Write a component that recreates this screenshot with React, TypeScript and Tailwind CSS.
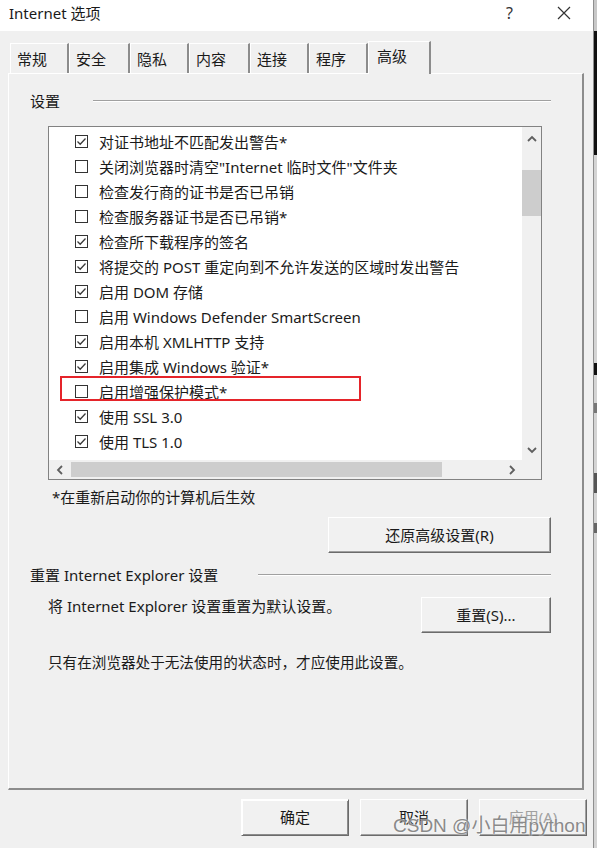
import React from 'react'

const FONT = { fontFamily: '"Noto Sans", "Noto Sans CJK SC", sans-serif' }

const TABS: { label: string; w: string; active?: boolean }[] = [
  { label: '常规', w: 'w-[59px]' },
  { label: '安全', w: 'w-[61px]' },
  { label: '隐私', w: 'w-[59px]' },
  { label: '内容', w: 'w-[61px]' },
  { label: '连接', w: 'w-[59px]' },
  { label: '程序', w: 'w-[59px]' },
  { label: '高级', w: 'w-[63px]', active: true },
]

const ROWS: { label: string; checked: boolean; marked?: boolean }[] = [
  { label: '对证书地址不匹配发出警告*', checked: true },
  { label: '关闭浏览器时清空"Internet 临时文件"文件夹', checked: false },
  { label: '检查发行商的证书是否已吊销', checked: false },
  { label: '检查服务器证书是否已吊销*', checked: false },
  { label: '检查所下载程序的签名', checked: true },
  { label: '将提交的 POST 重定向到不允许发送的区域时发出警告', checked: true },
  { label: '启用 DOM 存储', checked: true },
  { label: '启用 Windows Defender SmartScreen', checked: false },
  { label: '启用本机 XMLHTTP 支持', checked: true },
  { label: '启用集成 Windows 验证*', checked: true },
  { label: '启用增强保护模式*', checked: false, marked: true },
  { label: '使用 SSL 3.0', checked: true },
  { label: '使用 TLS 1.0', checked: true },
  { label: '使用 TLS 1.1', checked: true },
]

const btn =
  'flex items-center justify-center bg-[#f1f1f1] border border-t-white border-l-white border-r-[#6b6b6b] border-b-[#6b6b6b] shadow-[inset_-1px_-1px_0_#a0a0a0] text-[15px] text-[#1a1a1a] leading-none'

function Chevron({ dir }: { dir: 'up' | 'down' | 'left' | 'right' }) {
  const pts = {
    up: '1,6 5,2 9,6',
    down: '1,2 5,6 9,2',
    left: '6,1 2,5 6,9',
    right: '2,1 6,5 2,9',
  }[dir]
  const vertical = dir === 'up' || dir === 'down'
  return (
    <svg width={vertical ? 10 : 8} height={vertical ? 8 : 10} viewBox={vertical ? '0 0 10 8' : '0 0 8 10'}>
      <polyline points={pts} fill="none" stroke="#5f5f5f" strokeWidth="1.8" />
    </svg>
  )
}

function CheckBox({ checked }: { checked: boolean }) {
  return (
    <span className="w-[13px] h-[13px] border border-[#333] bg-white flex items-center justify-center shrink-0">
      {checked && (
        <svg width="11" height="11" viewBox="0 0 11 11">
          <polyline points="1.5,5.5 4.2,8.2 9.5,2.5" fill="none" stroke="#3a3a3a" strokeWidth="1.3" />
        </svg>
      )}
    </span>
  )
}

function Header({ label, gap }: { label: string; gap: string }) {
  return (
    <div className={`flex items-center h-[20px] ${gap}`}>
      <span className="text-[15px] leading-[20px] whitespace-nowrap">{label}</span>
      <div className="flex-1 h-[2px] border-t border-[#a0a0a0] border-b border-b-white" />
    </div>
  )
}

export default function App() {
  return (
    <div className="w-[597px] h-[848px] flex overflow-hidden bg-[#f0f0f0] text-[#1a1a1a]" style={FONT}>
      <div className="w-[593px] flex flex-col relative">
        {/* title bar */}
        <div className="h-[31px] bg-white flex items-center justify-between pl-[9px] pr-[22px]">
          <span className="text-[15px] leading-none -mt-[5px]">Internet 选项</span>
          <div className="flex items-center gap-[44px] -mt-[5px]">
            <span className="text-[16px] leading-none text-[#333]">?</span>
            <svg width="14" height="14" viewBox="0 0 14 14">
              <path d="M1 1 L13 13 M13 1 L1 13" stroke="#333" strokeWidth="1.2" />
            </svg>
          </div>
        </div>

        <div className="px-[8px] pt-[10px]">
          {/* tabs */}
          <div className="flex items-end h-[32px] pl-[2px]">
            {TABS.map(t =>
              t.active ? (
                <div
                  key={t.label}
                  className={`${t.w} h-[33px] -mb-[1px] relative z-10 bg-[#f0f0f0] border-l border-t border-white border-r-2 border-r-[#8c8c8c] pl-[8px] pt-[4px] text-[15px] leading-[20px]`}
                >
                  {t.label}
                </div>
              ) : (
                <div
                  key={t.label}
                  className={`${t.w} h-[30px] bg-[#f0f0f0] border-l border-t border-white border-r-2 border-r-[#8c8c8c] pl-[6px] pt-[5px] text-[15px] leading-[20px]`}
                >
                  {t.label}
                </div>
              ),
            )}
          </div>

          {/* tab panel */}
          <div className="w-[576px] h-[717px] border-l border-t border-white border-r-2 border-b-2 border-r-[#8c8c8c] border-b-[#8c8c8c] pl-[21px] pr-[31px] pt-[17px]">
            <Header label="设置" gap="gap-[33px]" />

            {/* list box */}
            <div className="ml-[18px] mt-[15px] w-[494px] h-[354px] border border-[#828282] bg-white flex flex-col">
              <div className="flex flex-1 min-h-0">
                <div className="flex-1 overflow-hidden pt-[2px]">
                  {ROWS.map(r => (
                    <div key={r.label} className="relative h-[25px] flex items-center pl-[26px] gap-[11px]">
                      <CheckBox checked={r.checked} />
                      <span className="text-[15px] leading-[20px] whitespace-nowrap">{r.label}</span>
                      {r.marked && (
                        <div className="absolute left-[11px] top-[-3px] w-[301px] h-[25px] border-2 border-[#e5242a]" />
                      )}
                    </div>
                  ))}
                </div>
                <div className="w-[19px] bg-[#f0f0f0] flex flex-col">
                  <div className="h-[21px] flex items-center justify-center pt-[2px]">
                    <Chevron dir="up" />
                  </div>
                  <div className="h-[22px]" />
                  <div className="h-[46px] bg-[#cdcdcd]" />
                  <div className="flex-1" />
                  <div className="h-[21px] flex items-center justify-center">
                    <Chevron dir="down" />
                  </div>
                </div>
              </div>
              <div className="h-[19px] flex bg-[#f0f0f0]">
                <div className="w-[20px] flex items-center justify-center pl-[2px]">
                  <Chevron dir="left" />
                </div>
                <div className="ml-[2px] w-[371px] my-[2px] bg-[#cdcdcd]" />
                <div className="flex-1" />
                <div className="w-[20px] flex items-center justify-center">
                  <Chevron dir="right" />
                </div>
                <div className="w-[19px]" />
              </div>
            </div>

            <div className="ml-[22px] mt-[7px] text-[15px] leading-[20px]">*在重新启动你的计算机后生效</div>

            <div className="flex justify-end mt-[10px]">
              <div className={`${btn} w-[223px] h-[36px]`}>还原高级设置(R)</div>
            </div>

            <div className="mt-[12px]">
              <Header label="重置 Internet Explorer 设置" gap="gap-[40px]" />
            </div>

            <div className="mt-[12px] flex justify-between items-start pl-[18px]">
              <span className="text-[15px] leading-[20px] -mt-[1px]">将 Internet Explorer 设置重置为默认设置。</span>
              <div className={`${btn} w-[130px] h-[36px]`}>重置(S)...</div>
            </div>

            <div className="mt-[19px] pl-[18px] text-[14.6px] leading-[20px]">
              只有在浏览器处于无法使用的状态时，才应使用此设置。
            </div>
          </div>

          {/* dialog buttons */}
          <div className="flex justify-end gap-[11px] pr-[-2px] mt-[9px] -mr-[2px]">
            <div className={`${btn} w-[108px] h-[37px] border-[#555] shadow-[inset_1px_1px_0_#fff,inset_-1px_-1px_0_#8c8c8c]`}>确定</div>
            <div className={`${btn} w-[108px] h-[37px]`}>取消</div>
            <div className={`${btn} w-[108px] h-[37px] text-[#a0a0a0]`}>应用(A)</div>
          </div>
        </div>

        {/* watermark */}
        <div
          className="absolute left-[393px] top-[814px] text-[19px] leading-[24px] text-[#8a8a8a] whitespace-nowrap [text-shadow:0_0_2px_#ffffff]"
          style={{ fontFamily: '"Liberation Sans", "Noto Sans CJK SC", sans-serif' }}
        >
          CSDN @小白用python
        </div>
      </div>

      {/* neighbouring window edge */}
      <div className="w-[4px] border-l border-[#8f8f8f] flex flex-col bg-[#d4d4d4]">
        <div className="h-[31px] bg-[#c8c8c8]" />
        <div className="h-[124px] bg-[#111]" />
        <div className="h-[208px]" />
        <div className="h-[12px] bg-[#111]" />
        <div className="h-[28px]" />
        <div className="h-[10px] bg-[#777]" />
        <div className="h-[60px]" />
        <div className="h-[20px] bg-[#555]" />
        <div className="h-[30px]" />
        <div className="h-[10px] bg-[#666]" />
        <div className="flex-1" />
      </div>
    </div>
  )
}
